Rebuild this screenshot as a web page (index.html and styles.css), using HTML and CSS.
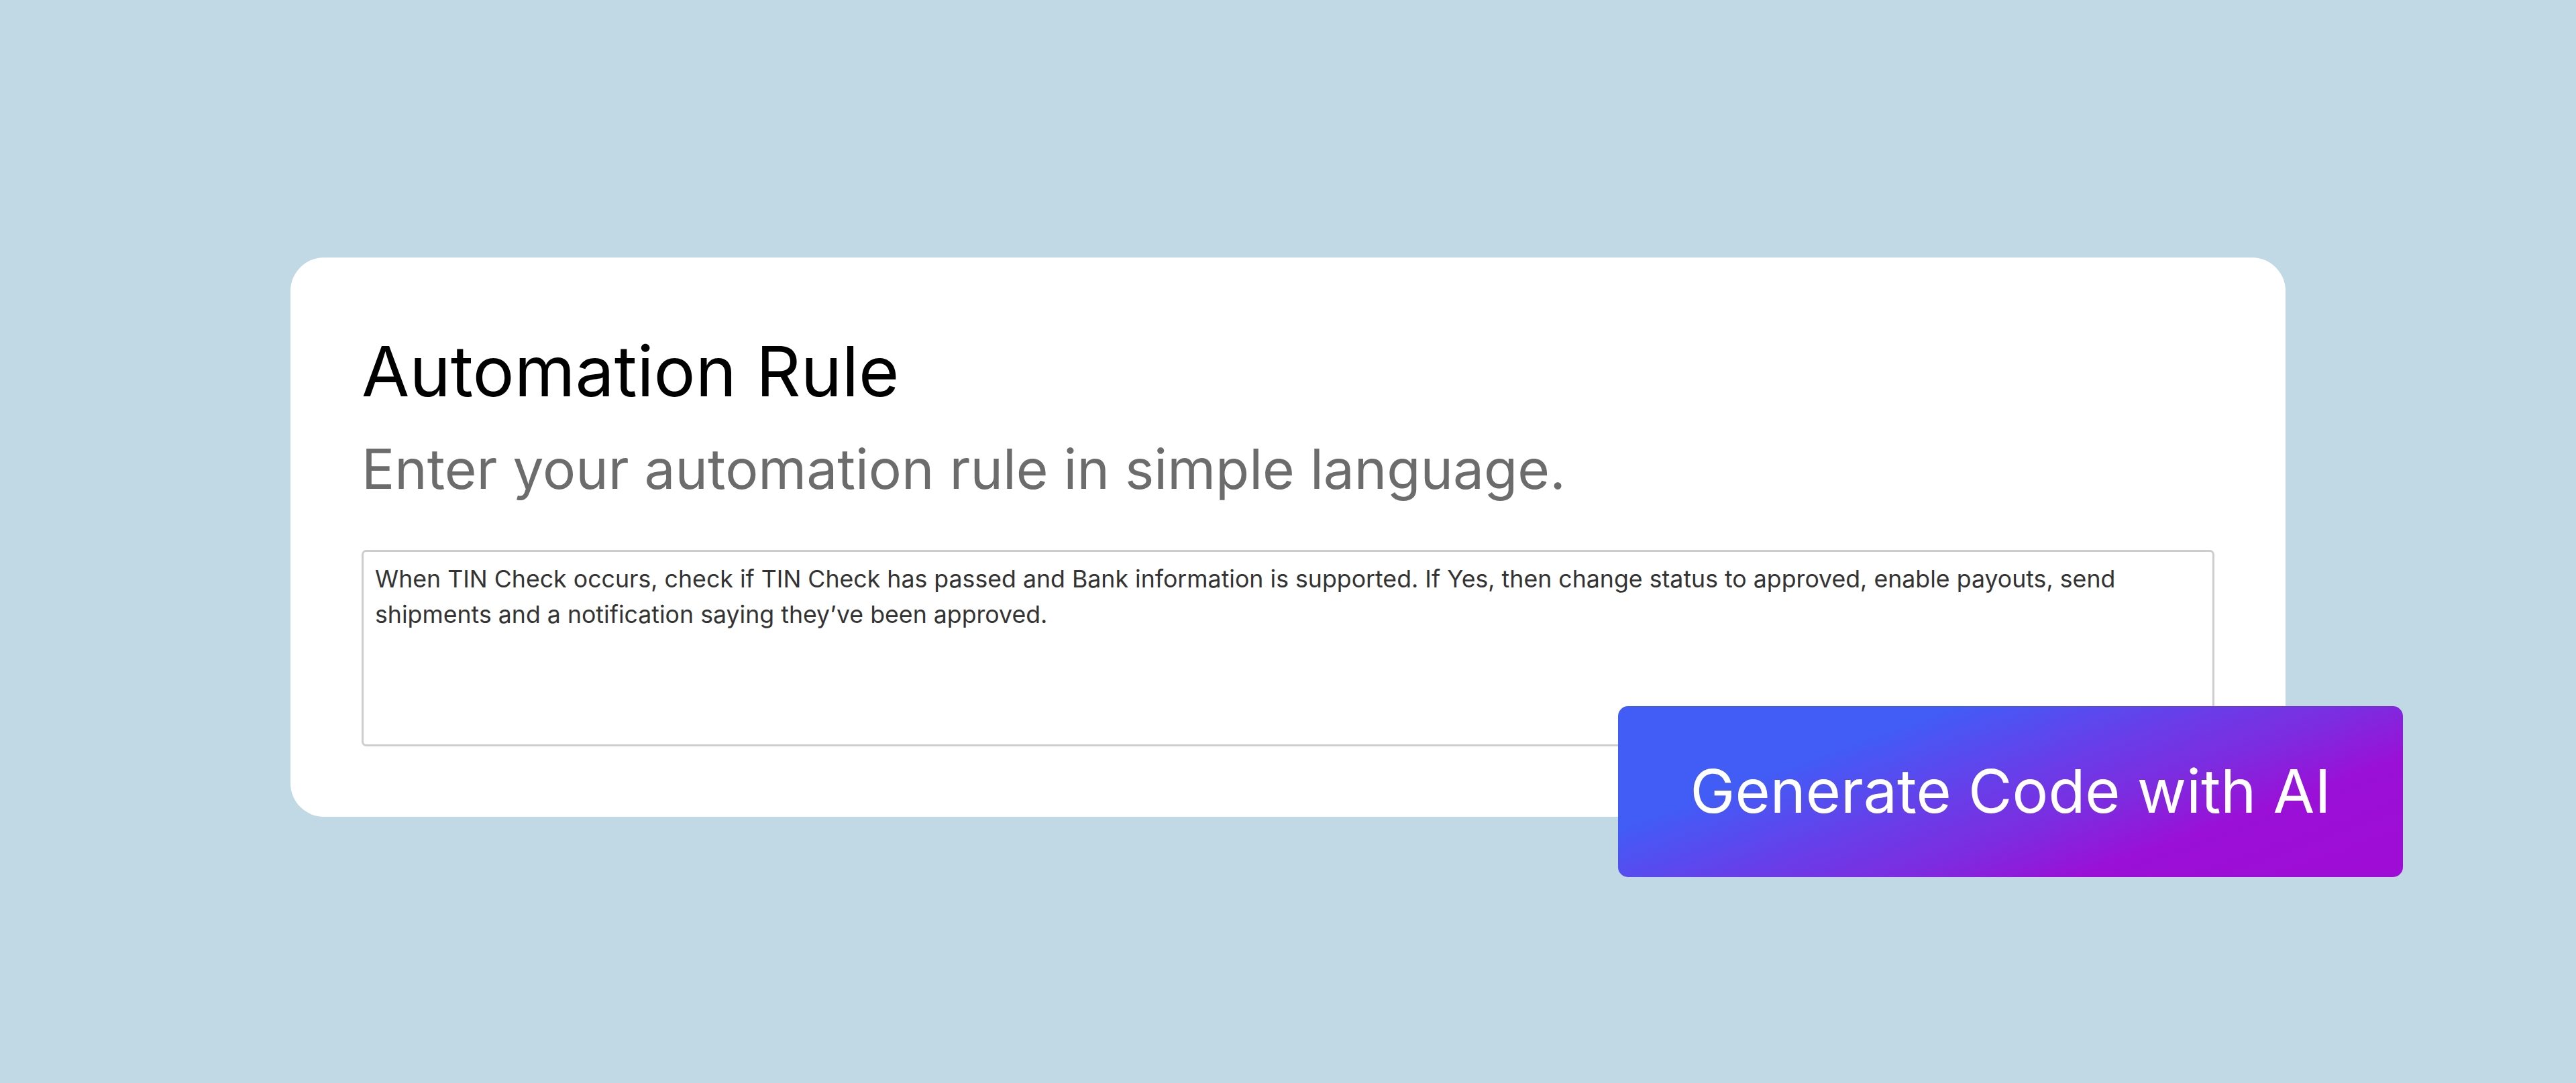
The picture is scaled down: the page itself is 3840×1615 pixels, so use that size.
FILE: index.html
```html
<!DOCTYPE html>
<html>
<head>
<meta charset="utf-8">
<link rel="stylesheet" href="styles.css">
</head>
<body>
<main class="stage">
  <section class="card">
    <h1 class="title">Automation Rule</h1>
    <p class="subtitle">Enter your automation rule in simple language.</p>
    <div class="rule-box">When TIN Check occurs, check if TIN Check has passed and Bank information is supported. If Yes, then change status to approved, enable payouts, send shipments and a notification saying they’ve been approved.</div>
  </section>
  <button class="generate">Generate Code with AI</button>
</main>
</body>
</html>
```
FILE: styles.css
```css
html, body { margin: 0; padding: 0; }
body {
  width: 3840px;
  height: 1615px;
  background: #c1d8e5;
  font-family: Inter, "Open Sans", sans-serif;
  overflow: hidden;
}
.stage {
  position: relative;
  width: 3840px;
  height: 1615px;
  padding: 384px 0 0 433px;
  box-sizing: border-box;
}
.card {
  width: 2974px;
  height: 834px;
  box-sizing: border-box;
  background: #fff;
  border-radius: 50px;
  padding: 108px 106px 105px 106px;
  display: flex;
  flex-direction: column;
}
.title {
  margin: 0;
  font-weight: 400;
  font-size: 103.6px;
  line-height: 124px;
  color: #000;
}
.subtitle {
  margin: 34px 0 0 0;
  font-size: 82px;
  line-height: 100px;
  color: #6c6c6c;
}
.rule-box {
  margin-top: 70px;
  height: 293px;
  box-sizing: border-box;
  border: 3px solid #cdcdcd;
  border-radius: 7px;
  padding: 14px 17px;
  font-size: 35.7px;
  line-height: 53px;
  color: #333;
}
.generate {
  position: absolute;
  left: 2412px;
  top: 1053px;
  width: 1170px;
  height: 255px;
  border: 0;
  border-radius: 15px;
  background: linear-gradient(160deg, #425cf6 0%, #425cf6 27%, #6a3ce8 48%, #7d2ce0 60%, #9a10d7 74%, #a00cd5 100%);
  color: #fff;
  font-family: Inter, "Open Sans", sans-serif;
  font-size: 89.7px;
  line-height: 1.21;
  padding: 0;
  display: flex;
  align-items: center;
  justify-content: center;
}
```
